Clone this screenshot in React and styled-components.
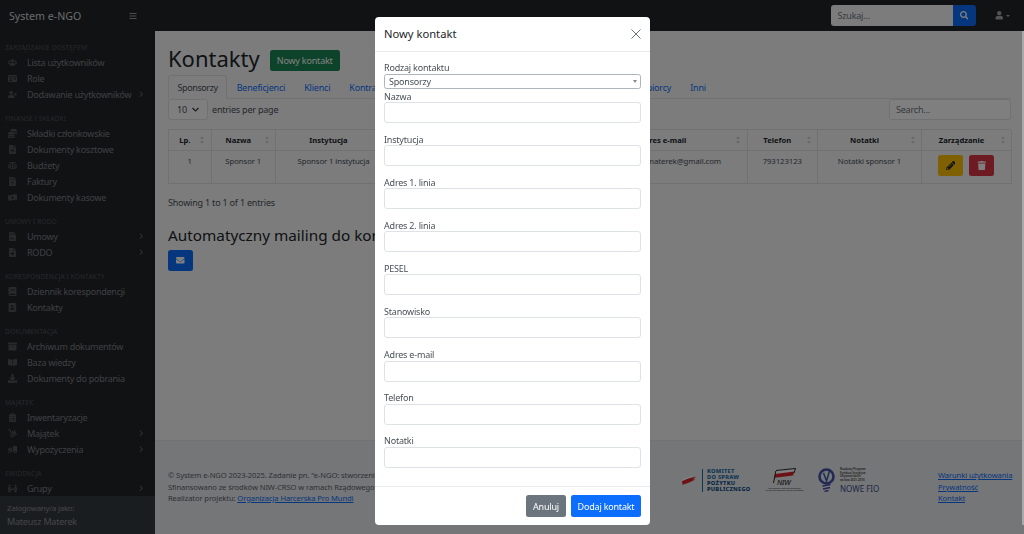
import React from 'react';
import styled, { createGlobalStyle } from 'styled-components';
import {
  FaUsers, FaIdCard, FaUserPlus, FaCoins, FaFileAlt, FaBalanceScale, FaFileInvoiceDollar, FaMoneyBillWave,
  FaFileContract, FaFileMedical, FaBook, FaAddressBook, FaArchive, FaBookOpen, FaDownload, FaClipboardList,
  FaDolly, FaTruckLoading, FaPeopleArrows, FaBars, FaChevronRight, FaSearch, FaUser, FaPencilAlt, FaTrash, FaEnvelope,
} from 'react-icons/fa';

const Global = createGlobalStyle`
  html, body { margin: 0; padding: 0; height: 100%; overflow: hidden; }
  body { font-family: "Noto Sans", "Open Sans", sans-serif; font-size: 9px; letter-spacing: -.2px; color: #212529; background: #f8f9fa; }
  * { box-sizing: border-box; }
`;

const Shell = styled.div`
  display: flex; flex-direction: column; width: 1024px; height: 534px; overflow: hidden;
`;
const TopBar = styled.header`
  flex: 0 0 31px; height: 31px; background: #212529; display: flex; align-items: center;
`;
const Brand = styled.div`
  width: 123px; padding-left: 9px; font-size: 10.6px; letter-spacing: 0; color: rgba(255,255,255,.82); white-space: nowrap;
`;
const Burger = styled.span`
  color: rgba(255,255,255,.55); font-size: 8px; display: flex; margin-left: 6px;
`;
const TopRight = styled.div`
  margin-left: auto; display: flex; align-items: center; padding-right: 14px;
`;
const SearchBox = styled.div`
  display: flex; height: 21px; width: 145px; margin-right: 19px;
`;
const SearchInput = styled.div`
  flex: 1; background: #f8f9fa; border-radius: 3px 0 0 3px; color: #6c757d; padding: 0 7px; line-height: 21px;
`;
const SearchBtn = styled.div`
  width: 23px; background: #0d6efd; border-radius: 0 3px 3px 0; color: #fff; display: flex; align-items: center; justify-content: center; font-size: 8.5px;
`;
const UserMenu = styled.div`
  color: rgba(255,255,255,.6); display: flex; align-items: center; gap: 3px; font-size: 8.5px;
`;
const Caret = styled.i`
  display: block; width: 0; height: 0; border: 2.2px solid transparent; border-top-color: currentColor; border-bottom: 0;
`;

const Body = styled.div`
  flex: 1; display: flex; min-height: 0;
`;
const Sidebar = styled.aside`
  flex: 0 0 154.5px; background: #212529; display: flex; flex-direction: column; overflow: hidden;
`;
const SideNav = styled.nav`
  flex: 1; padding-top: 10.5px; overflow: hidden; min-height: 0;
`;
const SectionLabel = styled.div`
  height: 11px; line-height: 11px; padding-left: 5px; font-size: 6.6px; letter-spacing: .1px; color: rgba(255,255,255,.22); text-transform: uppercase; white-space: nowrap;
  margin-top: ${p => (p.$first ? 0 : 10.5)}px; margin-bottom: 1.5px;
`;
const NavRow = styled.div`
  height: 16px; display: flex; align-items: center; color: rgba(255,255,255,.42); letter-spacing: -.25px; white-space: nowrap;
`;
const NavIcon = styled.span`
  width: 27px; flex: none; padding-left: 8px; display: flex; color: rgba(255,255,255,.22); font-size: 9px;
`;
const NavArrow = styled.span`
  margin-left: auto; padding-right: 10px; display: flex; color: rgba(255,255,255,.25); font-size: 6.5px;
`;
const SideFooter = styled.div`
  flex: 0 0 38px; background: #343a40; padding: 6px 7px 0; color: rgba(255,255,255,.42); line-height: 13px;
`;
const SideCaption = styled.div`
  font-size: 7.8px;
`;
const Main = styled.main`
  flex: 1; display: flex; flex-direction: column; min-width: 0;
`;
const Content = styled.div`
  flex: 1; padding: 16px 13px 0 13.5px; min-height: 0;
`;
const TitleRow = styled.div`
  display: flex; align-items: center; height: 27px; gap: 10px;
`;
const H1 = styled.h1`
  margin: 0; align-self: flex-start; font-size: 22px; font-weight: 400; letter-spacing: 0; line-height: 22px; color: #212529;
`;
const Btn = styled.button`
  border: 0; border-radius: 2.5px; font: inherit; letter-spacing: inherit; cursor: pointer; display: inline-flex; align-items: center; justify-content: center; font-size: ${p => p.$fs || 9}px;
  background: ${p => p.$bg}; width: ${p => p.$w}px; height: ${p => p.$h || 21}px; padding: 0; white-space: nowrap; color: ${p => p.$fg || '#fff'};
`;
const Tabs = styled.div`
  display: flex; height: 24px; margin-top: 1px; border-bottom: 1px solid #dee2e6;
`;
const Tab = styled.div`
  padding: 0 8.5px; height: 24px; line-height: 23px; white-space: nowrap; color: ${p => (p.$active ? '#495057' : '#0d6efd')};
  letter-spacing: ${p => (p.$active ? '-.4px' : '-.2px')};
  border: 1px solid ${p => (p.$active ? '#dee2e6' : 'transparent')}; border-bottom-color: ${p => (p.$active ? '#f8f9fa' : 'transparent')}; border-radius: 3px 3px 0 0;
`;
const Controls = styled.div`
  display: flex; align-items: center; justify-content: space-between; height: 21px;
`;
const PerPage = styled.div`
  display: flex; align-items: center; gap: 4px; color: #495057;
`;
const Select = styled.div`
  width: 40px; height: 21px; border: 1px solid #dee2e6; border-radius: 3px; display: flex; align-items: center; justify-content: center; gap: 5px; background: #fff;
`;
const Chevron = styled.svg`
  width: 7px; height: 5px; fill: none; stroke: #343a40; stroke-width: 1.2;
`;
const Search = styled.div`
  width: 122px; height: 21px; border: 1px solid #dee2e6; border-radius: 3px; background: #fff; color: #6c757d; padding: 0 6px; line-height: 19px;
`;
const Table = styled.div`
  margin-top: 9px; display: grid; grid-template-columns: 42.5px 64.5px 116px 197px 158.5px 70.5px 104px 90px; border: solid #dee2e6; border-width: 1px 0 0 1px; width: 843px;
`;
const Cell = styled.div`
  border: solid #dee2e6; border-width: 0 1px 1px 0; position: relative; text-align: center; white-space: nowrap; overflow: hidden;
  height: ${p => (p.$head ? 21 : 33)}px; line-height: 20px; font-weight: ${p => (p.$head ? 700 : 400)}; font-size: ${p => (p.$head ? 7.6 : 7.8)}px;
  letter-spacing: ${p => (p.$head ? 0 : '-.1px')}; padding-right: ${p => (p.$head ? 10 : 0)}px; color: ${p => (p.$head ? '#212529' : '#495057')};
`;
const Sort = styled.svg`
  position: absolute; right: 6.5px; top: 6px; width: 4px; height: 8px; fill: #c5c9cd;
`;
const Actions = styled.div`
  display: flex; justify-content: center; gap: 6px; padding: 4px 1px 0 0;
`;
const Info = styled.div`
  margin-top: 13px; line-height: 12px; color: #495057;
`;
const H2 = styled.h2`
  margin: 16px 0 5px; font-size: 15.3px; font-weight: 400; letter-spacing: 0; line-height: 20px; white-space: nowrap;
`;
const Foot = styled.footer`
  flex: 0 0 94px; background: #e9ecef; border-top: 1px solid #e2e5e8; display: flex; align-items: flex-start; padding: 29px 0 0 13.5px;
`;
const FootText = styled.div`
  width: 514px; color: #5c636a; font-size: 7.6px; letter-spacing: -.1px; line-height: 11.5px; white-space: nowrap; overflow: hidden; flex: none;
`;
const FootLink = styled.a`
  color: #0d6efd; text-decoration: underline;
`;
const Logos = styled.div`
  flex: none; display: flex; align-items: flex-start; margin-top: -2px; gap: 21px;
`;
const Komitet = styled.div`
  display: flex; align-items: center; height: 24px; width: 69px;
`;
const KomitetRule = styled.i`
  display: block; width: 1px; height: 23px; background: #1d6fa5; margin: 0 4px 0 5px;
`;
const KomitetText = styled.div`
  font-size: 5.7px; font-weight: 800; letter-spacing: .25px; line-height: 6.1px; color: #1f6da8; white-space: nowrap;
`;
const KomitetDark = styled.span`
  color: #0b4f86;
`;
const Niw = styled.div`
  width: 25px; display: flex; flex-direction: column; align-items: center;
`;
const NiwCaption = styled.div`
  font-size: 2.3px; line-height: 2.6px; letter-spacing: 0; font-weight: 700; color: #666; text-align: center; white-space: nowrap; margin-top: 1.5px;
`;
const Fio = styled.div`
  display: flex; gap: 5px; width: 62px;
`;
const FioText = styled.div`
  display: flex; flex-direction: column;
`;
const FioSmall = styled.div`
  font-size: 2.9px; line-height: 3.5px; letter-spacing: 0; font-weight: 600; color: #444; white-space: nowrap;
`;
const FioName = styled.div`
  font-size: 8px; line-height: 9px; letter-spacing: 0; color: #3f4c92; white-space: nowrap; margin-top: 1.5px;
`;
const FootLinks = styled.div`
  margin-left: auto; margin-right: 6px; display: flex; flex-direction: column; width: 80px; line-height: 11.5px; font-size: 7.6px; letter-spacing: -.1px; white-space: nowrap;
`;
const Scrollbar = styled.div`
  position: fixed; right: 0; top: 31px; bottom: 9px; width: 2px; background: #a9a9a9;
`;

const Backdrop = styled.div`
  position: fixed; inset: 0; background: rgba(0,0,0,.5);
`;
const Modal = styled.div`
  position: fixed; left: 375px; top: 17px; width: 275px; height: 508px; background: #fff; border-radius: 4px; display: flex; flex-direction: column; color: #212529;
`;
const ModalHead = styled.div`
  flex: 0 0 35px; border-bottom: 1px solid #e9ecef; display: flex; align-items: center; justify-content: space-between; padding: 0 9px 1px 9px;
`;
const ModalTitle = styled.div`
  font-size: 11.2px; font-weight: 400; letter-spacing: 0; color: #212529;
`;
const ModalBody = styled.div`
  flex: 1; padding: 8px 9px 0;
`;
const Label = styled.label`
  display: block; height: 13.5px; line-height: 15px; color: #495057; white-space: nowrap;
`;
const Dropdown = styled.div`
  height: 15px; border: 1px solid #adb5bd; border-radius: 2.5px; padding: 1px 3px 0 4px; line-height: 13px; display: flex; justify-content: space-between; align-items: center; color: #495057;
`;
const DropCaret = styled.i`
  display: block; width: 0; height: 0; border: 2.2px solid transparent; border-top: 3px solid #888; border-bottom: 0;
`;
const Field = styled.div`
  height: 43.1px;
`;
const Input = styled.input`
  display: block; width: 100%; height: 21px; border: 1px solid #dee2e6; border-radius: 3px; background: #fff; padding: 0; outline: 0;
`;
const ModalFoot = styled.div`
  flex: 0 0 39px; border-top: 1px solid #e9ecef; display: flex; justify-content: flex-end; align-items: flex-start; gap: 5px; padding: 8px 9px 0;
`;

const Icon = ({ as: C }) => <C />;
const nav = [
  ['Zarządzanie dostępem', [[FaUsers, 'Lista użytkowników'], [FaIdCard, 'Role'], [FaUserPlus, 'Dodawanie użytkowników', 1]]],
  ['Finanse i składki', [[FaCoins, 'Składki członkowskie'], [FaFileAlt, 'Dokumenty kosztowe'], [FaBalanceScale, 'Budżety'], [FaFileInvoiceDollar, 'Faktury'], [FaMoneyBillWave, 'Dokumenty kasowe']]],
  ['Umowy i RODO', [[FaFileContract, 'Umowy', 1], [FaFileMedical, 'RODO', 1]]],
  ['Korespondencja i kontakty', [[FaBook, 'Dziennik korespondencji'], [FaAddressBook, 'Kontakty']]],
  ['Dokumentacja', [[FaArchive, 'Archiwum dokumentów'], [FaBookOpen, 'Baza wiedzy'], [FaDownload, 'Dokumenty do pobrania']]],
  ['Majątek', [[FaClipboardList, 'Inwentaryzacje'], [FaDolly, 'Majątek', 1], [FaTruckLoading, 'Wypożyczenia', 1]]],
  ['Ewidencja', [[FaPeopleArrows, 'Grupy', 1]]],
];
const tabs = ['Sponsorzy', 'Beneficjenci', 'Klienci', 'Kontrahenci', 'Sprzedawcy', 'Wolontariusze', 'Usługodawcy', 'Odbiorcy', 'Inni'];
const heads = ['Lp.', 'Nazwa', 'Instytucja', 'Adres', 'Adres e-mail', 'Telefon', 'Notatki', 'Zarządzanie'];
const fields = ['Nazwa', 'Instytucja', 'Adres 1. linia', 'Adres 2. linia', 'PESEL', 'Stanowisko', 'Adres e-mail', 'Telefon', 'Notatki'];

const SortIcon = () => (
  <Sort viewBox="0 0 5 9"><path d="M2.5 0 5 3H0zM2.5 9 0 6h5z" /></Sort>
);

export default function App() {
  return (
    <>
      <Global />
      <Shell>
        <TopBar>
          <Brand>System e-NGO</Brand>
          <Burger><FaBars /></Burger>
          <TopRight>
            <SearchBox>
              <SearchInput>Szukaj...</SearchInput>
              <SearchBtn><FaSearch /></SearchBtn>
            </SearchBox>
            <UserMenu><FaUser /><Caret /></UserMenu>
          </TopRight>
        </TopBar>
        <Body>
          <Sidebar>
            <SideNav>
              {nav.map(([label, rows], i) => (
                <div key={label}>
                  <SectionLabel $first={i === 0}>{label}</SectionLabel>
                  {rows.map(([Ic, text, arrow]) => (
                    <NavRow key={text}>
                      <NavIcon><Icon as={Ic} /></NavIcon>
                      {text}
                      {arrow && <NavArrow><FaChevronRight /></NavArrow>}
                    </NavRow>
                  ))}
                </div>
              ))}
            </SideNav>
            <SideFooter>
              <SideCaption>Zalogowany/a jako:</SideCaption>
              Mateusz Materek
            </SideFooter>
          </Sidebar>
          <Main>
            <Content>
              <TitleRow>
                <H1>Kontakty</H1>
                <Btn $bg="#198754" $w={70}>Nowy kontakt</Btn>
              </TitleRow>
              <Tabs>
                {tabs.map((t, i) => <Tab key={t} $active={i === 0}>{t}</Tab>)}
              </Tabs>
              <Controls>
                <PerPage>
                  <Select>10<Chevron viewBox="0 0 7 5"><path d="M.5 1l3 3 3-3" /></Chevron></Select>
                  entries per page
                </PerPage>
                <Search>Search...</Search>
              </Controls>
              <Table>
                {heads.map(h => <Cell $head key={h}>{h}<SortIcon /></Cell>)}
                <Cell>1</Cell>
                <Cell>Sponsor 1</Cell>
                <Cell>Sponsor 1 instytucja</Cell>
                <Cell>Adres sponsor 1</Cell>
                <Cell>mateusz.materek@gmail.com</Cell>
                <Cell>793123123</Cell>
                <Cell>Notatki sponsor 1</Cell>
                <Cell>
                  <Actions>
                    <Btn $bg="#ffc107" $fg="#212529" $w={25} $fs={9.5}><FaPencilAlt /></Btn>
                    <Btn $bg="#dc3545" $w={25} $fs={9.5}><FaTrash /></Btn>
                  </Actions>
                </Cell>
              </Table>
              <Info>Showing 1 to 1 of 1 entries</Info>
              <H2>Automatyczny mailing do kontaktów</H2>
              <Btn $bg="#0d6efd" $w={25} $fs={8.5}><FaEnvelope /></Btn>
            </Content>
            <Foot>
              <FootText>
                © System e-NGO 2023-2025. Zadanie pn. "e-NGO: stworzenie systemu dla organizacji pozarządowych"<br />
                Sfinansowano ze środków NIW-CRSO w ramach Rządowego Programu Fundusz Inicjatyw Obywatelskich<br />
                Realizator projektu: <FootLink>Organizacja Harcerska Pro Mundi</FootLink>
              </FootText>
              <Logos>
                <Komitet>
                  <svg width="15" height="9" viewBox="0 0 15 9">
                    <path d="M0 5 6 2.5 14 .8 11 3.4 13.5 3.4 6 7 .5 8.8Z" fill="#d8232a" />
                    <path d="M0 3.5 6 1 11 0 6 2.5 0 5Z" fill="#fff" />
                  </svg>
                  <KomitetRule />
                  <KomitetText>
                    KOMITET<br />DO SPRAW<br /><KomitetDark>POŻYTKU</KomitetDark><br /><KomitetDark>PUBLICZNEGO</KomitetDark>
                  </KomitetText>
                </Komitet>
                <Niw>
                  <svg width="25" height="18" viewBox="0 0 25 18">
                    <path d="M4 2.5 23 .5 21 6.5 2.5 9.5Z" fill="#fff" />
                    <path d="M3.2 6 22.3 3.5 21 7.5 2.5 9.8Z" fill="#d8232a" />
                    <path d="M4 2.5 23.5.5 22 5M3.8 3 1.5 15" fill="none" stroke="#111" strokeWidth=".9" />
                    <text x="5" y="17" fontSize="7.5" fontStyle="italic" fontWeight="400" fill="#111" fontFamily="Noto Sans, sans-serif">NIW</text>
                  </svg>
                  <NiwCaption>Narodowy Instytut Wolności<br />Centrum Rozwoju Społeczeństwa</NiwCaption>
                </Niw>
                <Fio>
                  <svg width="17" height="24" viewBox="0 0 17 24">
                    <circle cx="8.5" cy="8.5" r="7" fill="none" stroke="#4a50a8" strokeWidth="2.6" />
                    <path d="M5.5 5 8.5 13 11.5 3" fill="none" stroke="#2b5fa8" strokeWidth="1.5" />
                    <path d="M4.5 18 12.5 16.5M5 21 12 19.5M6.5 23.5 10.5 22.5" fill="none" stroke="#4a50a8" strokeWidth="1.5" />
                  </svg>
                  <FioText>
                    <FioSmall>Rządowy Program</FioSmall>
                    <FioSmall>Fundusz Inicjatyw</FioSmall>
                    <FioSmall>Obywatelskich</FioSmall>
                    <FioSmall>na lata 2021-2030</FioSmall>
                    <FioName>NOWE FIO</FioName>
                  </FioText>
                </Fio>
              </Logos>
              <FootLinks>
                <FootLink>Warunki użytkowania</FootLink>
                <FootLink>Prywatność</FootLink>
                <FootLink>Kontakt</FootLink>
              </FootLinks>
            </Foot>
          </Main>
        </Body>
      </Shell>
      <Backdrop />
      <Scrollbar />
      <Modal>
        <ModalHead>
          <ModalTitle>Nowy kontakt</ModalTitle>
          <svg width="10" height="10" viewBox="0 0 10 10" stroke="#6c757d" strokeWidth="1"><path d="M.5.5l9 9M9.5.5l-9 9" /></svg>
        </ModalHead>
        <ModalBody>
          <Label>Rodzaj kontaktu</Label>
          <Dropdown>Sponsorzy<DropCaret /></Dropdown>
          {fields.map(f => (
            <Field key={f}>
              <Label>{f}</Label>
              <Input />
            </Field>
          ))}
        </ModalBody>
        <ModalFoot>
          <Btn $bg="#6c757d" $w={40} $h={22}>Anuluj</Btn>
          <Btn $bg="#0d6efd" $w={70} $h={22}>Dodaj kontakt</Btn>
        </ModalFoot>
      </Modal>
    </>
  );
}
